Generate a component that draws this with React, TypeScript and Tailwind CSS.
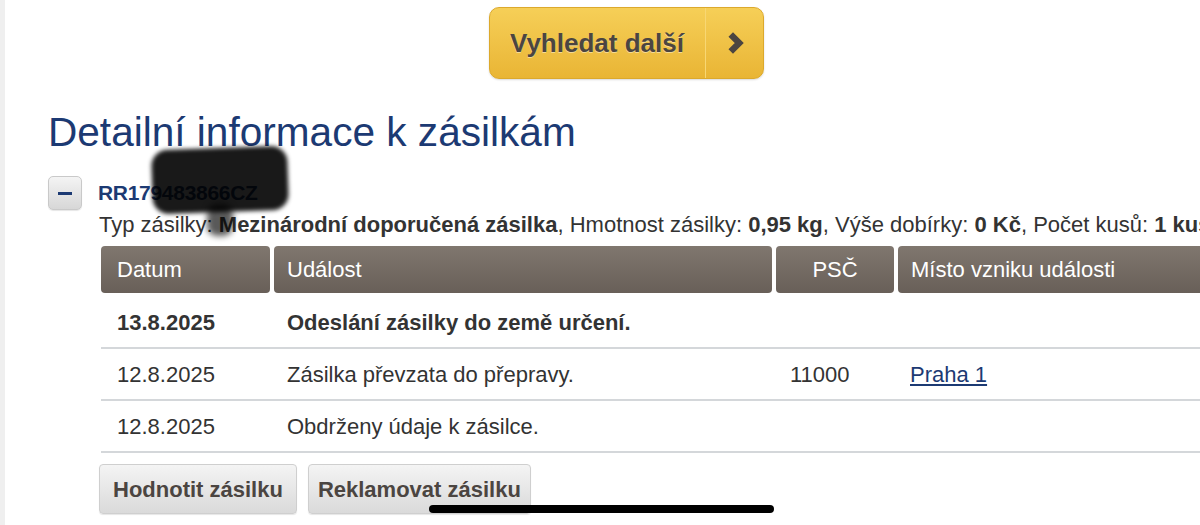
import { ChevronRight } from 'lucide-react';

const rows = [
  { date: '13.8.2025', event: 'Odeslání zásilky do země určení.', psc: '', place: '', bold: true },
  { date: '12.8.2025', event: 'Zásilka převzata do přepravy.', psc: '11000', place: 'Praha 1', bold: false },
  { date: '12.8.2025', event: 'Obdrženy údaje k zásilce.', psc: '', place: '', bold: false },
];

const font = { fontFamily: '"Liberation Sans", Arial, sans-serif' };

export default function App() {
  return (
    <div className="relative w-[1200px] h-[525px] overflow-hidden bg-white flex" style={font}>
      <div className="w-[5px] shrink-0 bg-[#efefef]" />

      <div className="flex-1 flex flex-col pl-[43px] min-w-0">
        {/* Search more */}
        <div className="mt-[7px] ml-[441px] flex h-[72px] w-[275px] rounded-[10px] bg-gradient-to-b from-[#f6cf57] to-[#e9b534] border border-[#dca92c] shadow-[0_1px_2px_rgba(0,0,0,0.15)]">
          <div className="flex-1 flex items-center pl-[20px] text-[26px] font-bold text-[#4b4541] [text-shadow:0_1px_0_rgba(255,255,255,0.45)]">
            Vyhledat další
          </div>
          <div className="w-px bg-[#d9a937] border-r border-[#f8d773]" />
          <div className="w-[57px] flex items-center justify-center text-[#4b4541]">
            <ChevronRight className="w-[34px] h-[34px]" strokeWidth={4.5} strokeLinecap="butt" strokeLinejoin="miter" />
          </div>
        </div>

        {/* Heading */}
        <h1 className="mt-[29px] text-[40.6px] leading-[48px] text-[#1c3a73] whitespace-nowrap">
          Detailní informace k zásilkám
        </h1>

        {/* Parcel */}
        <div className="mt-[20px] flex items-center gap-[16px]">
          <button className="w-[34px] h-[34px] rounded-[5px] border border-[#c9c9c9] bg-gradient-to-b from-[#f4f4f4] to-[#d7d7d7] flex items-center justify-center shadow-[0_1px_1px_rgba(0,0,0,0.1)]">
            <span className="block w-[14px] h-[3px] bg-[#1c3a73]" />
          </button>
          <span className="text-[21px] font-bold text-[#1c3a73] tracking-[-0.3px]">RR179483866CZ</span>
        </div>

        <div className="pl-[51px] mt-[2px] flex flex-col">
          <p className="text-[22px] leading-[26px] text-[#333] whitespace-nowrap">
            Typ zásilky: <b>Mezinárodní doporučená zásilka</b>, Hmotnost zásilky: <b>0,95 kg</b>, Výše dobírky:{' '}
            <b>0 Kč</b>, Počet kusů: <b>1 kus</b>
          </p>

          {/* Table */}
          <div className="mt-[8px] ml-[2px] w-[1110px]">
            <div className="grid grid-cols-[169px_498px_118px_1fr] gap-[4px] h-[47px] text-[22px] text-white">
              <div className="rounded-[4px] bg-gradient-to-b from-[#80776f] to-[#685f58] flex items-center pl-[16px]">Datum</div>
              <div className="rounded-[4px] bg-gradient-to-b from-[#80776f] to-[#685f58] flex items-center pl-[13px]">Událost</div>
              <div className="rounded-[4px] bg-gradient-to-b from-[#80776f] to-[#685f58] flex items-center justify-center">PSČ</div>
              <div className="rounded-[4px] bg-gradient-to-b from-[#80776f] to-[#685f58] flex items-center pl-[13px]">Místo vzniku události</div>
            </div>
            <div className="mt-[4px]">
              {rows.map((r, i) => (
                <div
                  key={i}
                  className={`grid grid-cols-[169px_498px_118px_1fr] gap-[4px] h-[52px] items-center border-b-2 border-[#d4d7da] text-[22px] text-[#333] ${
                    r.bold ? 'font-bold' : ''
                  }`}
                >
                  <div className="pl-[16px]">{r.date}</div>
                  <div className="pl-[13px]">{r.event}</div>
                  <div className="pl-[14px]">{r.psc}</div>
                  <div className="pl-[12px]">
                    {r.place && <a className="text-[#1c3a73] underline underline-offset-2">{r.place}</a>}
                  </div>
                </div>
              ))}
            </div>
          </div>

          {/* Actions */}
          <div className="mt-[11px] flex gap-[11px]">
            <button className="h-[50px] px-[13px] rounded-[4px] border border-[#cfcfcf] bg-gradient-to-b from-[#f4f4f4] to-[#dadada] text-[22px] font-bold text-[#4b4541] shadow-[0_1px_1px_rgba(0,0,0,0.1)]">
              Hodnotit zásilku
            </button>
            <button className="h-[50px] px-[9px] rounded-[4px] border border-[#cfcfcf] bg-gradient-to-b from-[#f4f4f4] to-[#dadada] text-[22px] font-bold text-[#4b4541] shadow-[0_1px_1px_rgba(0,0,0,0.1)]">
              Reklamovat zásilku
            </button>
          </div>
        </div>
      </div>

      {/* Redaction scribble */}
      <div className="absolute left-[152px] top-[148px] w-[136px] h-[64px] rounded-[16px] bg-black/90 blur-[2px] -rotate-2" />
      <div className="absolute left-[207px] top-[204px] w-[26px] h-[32px] rounded-[10px] bg-black/65 blur-[3px]" />

      {/* Home indicator */}
      <div className="absolute left-[429px] top-[505px] w-[345px] h-[8px] rounded-full bg-black" />
    </div>
  );
}
